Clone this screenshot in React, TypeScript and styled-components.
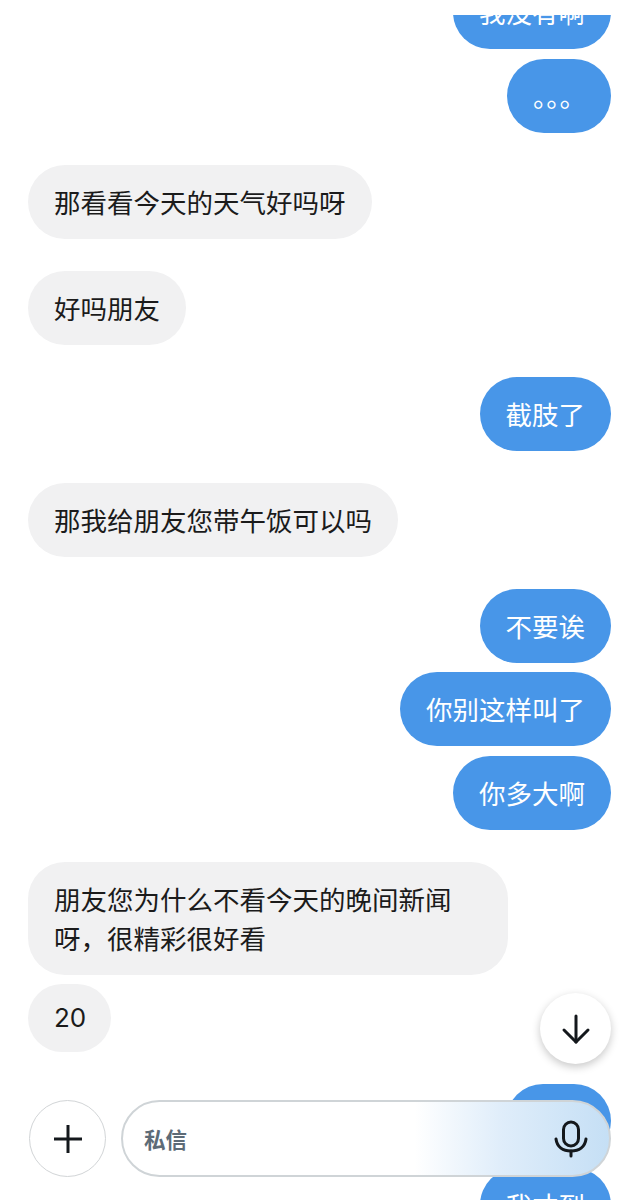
import React from 'react'
import styled, { createGlobalStyle } from 'styled-components'

const Global = createGlobalStyle`
  html, body { margin: 0; background: #fff; }
`

const Page = styled.div`
  position: relative;
  width: 638px;
  height: 1200px;
  overflow: hidden;
  background: #fff;
  font-family: "Noto Sans CJK SC", "Noto Sans", sans-serif;
`

const Thread = styled.div`
  height: 1185px;
  margin-top: 15px;
  overflow: hidden;
  display: flex;
  flex-direction: column;
  padding: 0 27px 0 28px;
`

const Row = styled.div<{ $mine?: boolean; $gap: number }>`
  display: flex;
  justify-content: ${p => (p.$mine ? 'flex-end' : 'flex-start')};
  margin-top: ${p => p.$gap}px;
  flex-shrink: 0;
`

const Bubble = styled.div<{ $mine?: boolean; $width?: number }>`
  box-sizing: border-box;
  ${p => (p.$width ? `width: ${p.$width}px;` : '')}
  padding: 17px 26px 18px;
  border-radius: 37px;
  font-size: 26.5px;
  line-height: 39px;
  white-space: nowrap;
  background: ${p => (p.$mine ? '#4896e8' : '#f1f1f2')};
  color: ${p => (p.$mine ? '#fff' : '#1b1b1b')};
`

const DotsBubble = styled(Bubble)`
  padding: 17px 38px 18px 26px;
  letter-spacing: 0;
`

const NumberBubble = styled(Bubble)`
  padding: 17px 25px 18px 26px;
  font-family: Inter, "Noto Sans", sans-serif;
  font-size: 26px;
  line-height: 33px;
`

const ScrollButton = styled.button`
  position: absolute;
  left: 540px;
  top: 993px;
  width: 71px;
  height: 71px;
  padding: 0;
  display: flex;
  align-items: center;
  justify-content: center;
  border: none;
  border-radius: 50%;
  background: #fff;
  box-shadow: 0 3px 9px rgba(0, 0, 0, 0.22);
`

const Composer = styled.div`
  position: absolute;
  left: 29px;
  top: 1100px;
  width: 582px;
  display: flex;
  gap: 15px;
`

const PlusButton = styled.button`
  box-sizing: border-box;
  width: 77px;
  height: 77px;
  padding: 0;
  flex-shrink: 0;
  display: flex;
  align-items: center;
  justify-content: center;
  border: 1.5px solid #d2d5d7;
  border-radius: 50%;
  background: #fff;
`

const InputPill = styled.div`
  box-sizing: border-box;
  flex: 1;
  height: 77px;
  display: flex;
  align-items: center;
  justify-content: space-between;
  padding: 0 21px 0 21px;
  border: 2px solid #cfd4d7;
  border-radius: 39px;
  background: linear-gradient(90deg, #fff 0%, #fff 60%, #dfedfa 78%, #c5dff5 100%);
`

const Placeholder = styled.span`
  font-size: 21.5px;
  font-weight: 700;
  color: #5d6b77;
`

export default function App(): JSX.Element {
  return (
    <Page>
      <Global />
      <Thread>
        <Row $mine $gap={-40}><Bubble $mine>我没有啊</Bubble></Row>
        <Row $mine $gap={10}><DotsBubble $mine>｡｡｡</DotsBubble></Row>
        <Row $gap={32}><Bubble>那看看今天的天气好吗呀</Bubble></Row>
        <Row $gap={32}><Bubble>好吗朋友</Bubble></Row>
        <Row $mine $gap={32}><Bubble $mine>截肢了</Bubble></Row>
        <Row $gap={32}><Bubble>那我给朋友您带午饭可以吗</Bubble></Row>
        <Row $mine $gap={32}><Bubble $mine>不要诶</Bubble></Row>
        <Row $mine $gap={9}><Bubble $mine>你别这样叫了</Bubble></Row>
        <Row $mine $gap={10}><Bubble $mine>你多大啊</Bubble></Row>
        <Row $gap={32}>
          <Bubble $width={480}>朋友您为什么不看今天的晚间新闻<br />呀，很精彩很好看</Bubble>
        </Row>
        <Row $gap={9}><NumberBubble>20</NumberBubble></Row>
        <Row $mine $gap={32}><Bubble $mine>好的</Bubble></Row>
        <Row $mine $gap={10}><Bubble $mine>我才到</Bubble></Row>
      </Thread>

      <ScrollButton aria-label="scroll down">
        <svg width="30" height="32" viewBox="0 0 30 32" fill="none" stroke="#14181c" strokeWidth="3" strokeLinecap="round" strokeLinejoin="round">
          <path d="M15 3v26" />
          <path d="M3 17l12 12 12-12" />
        </svg>
      </ScrollButton>

      <Composer>
        <PlusButton aria-label="add">
          <svg width="30" height="30" viewBox="0 0 30 30" fill="none" stroke="#14181c" strokeWidth="3">
            <path d="M15 1v28" />
            <path d="M1 15h28" />
          </svg>
        </PlusButton>
        <InputPill>
          <Placeholder>私信</Placeholder>
          <svg width="34" height="38" viewBox="0 0 34 38" fill="none" stroke="#14181c" strokeWidth="3" strokeLinecap="round">
            <rect x="9.5" y="2" width="15" height="24" rx="7.5" />
            <path d="M2 19c1 8 7 12 15 12s14-4 15-12" />
            <path d="M17 31v5" />
          </svg>
        </InputPill>
      </Composer>
    </Page>
  )
}
